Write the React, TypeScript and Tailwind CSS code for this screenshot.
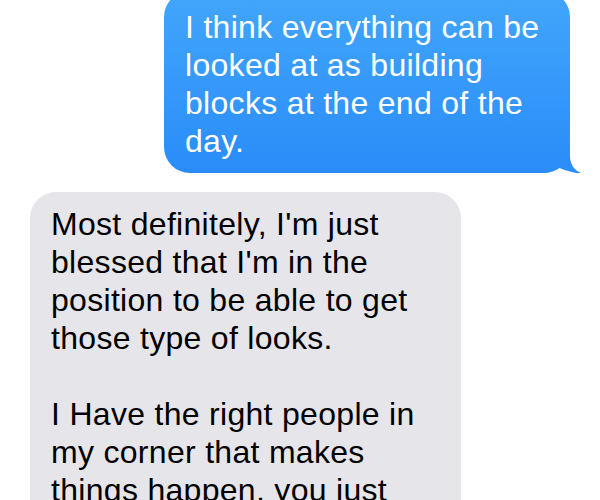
import React from 'react';

const font = "font-['Liberation_Sans',Arial,Helvetica,sans-serif]";

export default function App() {
  return (
    <div className={`w-[600px] h-[500px] overflow-hidden bg-white ${font} text-[32px] leading-[38px] tracking-[0.3px]`}>
      <div className="flex flex-col">
        {/* Outgoing */}
        <div className="relative ml-[164px] -mt-[9px] w-[406px] rounded-[26px] bg-linear-to-b from-[#42a6fc] to-[#2a8cf8] px-[21px] pt-[17px] pb-[13px] text-white">
          I think everything can be looked at as building blocks at the end of the day.
          <svg
            className="absolute right-[-12px] bottom-[-1px]"
            width="42"
            height="36"
            viewBox="0 0 42 36"
          >
            <defs>
              <linearGradient id="tailFill" gradientUnits="userSpaceOnUse" x1="0" y1="-147" x2="0" y2="35">
                <stop offset="0" stopColor="#42a6fc" />
                <stop offset="1" stopColor="#2a8cf8" />
              </linearGradient>
            </defs>
            <path
              d="M4 4 H30 V18 C30 26 34 32 41 35 C33 35.5 25 32 17 29 C12 33 6 35 4 35 Z"
              fill="url(#tailFill)"
            />
          </svg>
        </div>

        {/* Incoming */}
        <div className="mt-[19px] ml-[30px] w-[431px] rounded-[26px] bg-[#e5e5ea] px-[21px] pt-[13px] pb-[13px] text-black">
          <p>Most definitely, I'm just blessed that I'm in the position to be able to get those type of looks.</p>
          <p className="mt-[38px]">
            I Have the right people in my corner that makes things happen, you just have to keep working and stay
            humble.
          </p>
        </div>
      </div>
    </div>
  );
}
